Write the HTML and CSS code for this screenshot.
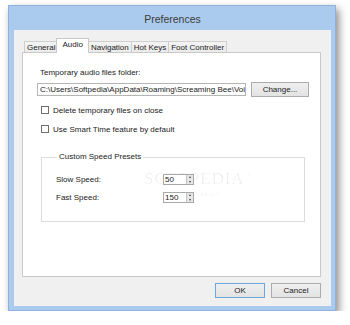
FILE: index.html
```html
<!DOCTYPE html>
<html lang="en">
<head>
  <meta charset="UTF-8">
  <title>Preferences</title>
  <link rel="stylesheet" href="styles.css">
</head>
<body>
  <!-- Окно настроек -->
  <div class="window">
    <div class="titlebar">Preferences</div>
    <div class="client">
      <div class="tabs">
        <div class="tab">General</div>
        <div class="tab active">Audio</div>
        <div class="tab">Navigation</div>
        <div class="tab">Hot Keys</div>
        <div class="tab">Foot Controller</div>
      </div>

      <div class="panel">
        <div class="label">Temporary audio files folder:</div>
        <div class="folder-row">
          <div class="textbox">C:\Users\Softpedia\AppData\Roaming\Screaming Bee\Voice</div>
          <button class="btn change">Change...</button>
        </div>

        <div class="check-row first"><span class="checkbox"></span>Delete temporary files on close</div>
        <div class="check-row"><span class="checkbox"></span>Use Smart Time feature by default</div>

        <fieldset class="group">
          <legend>Custom Speed Presets</legend>
          <div class="speed-row first">
            <span class="speed-label">Slow Speed:</span>
            <div class="spinner"><span class="value">50</span><span class="spin"><i class="up"></i><i class="down"></i></span></div>
          </div>
          <div class="speed-row">
            <span class="speed-label">Fast Speed:</span>
            <div class="spinner"><span class="value">150</span><span class="spin"><i class="up"></i><i class="down"></i></span></div>
          </div>
        </fieldset>

        <div class="watermark">SOFTPEDIA<sup>™</sup><small>www.softpedia.com</small></div>
      </div>

      <div class="actions">
        <button class="btn ok">OK</button>
        <button class="btn">Cancel</button>
      </div>
    </div>
  </div>
</body>
</html>
```

FILE: styles.css
```css
body {
  margin: 0;
  background: #fff;
  font-family: 'Liberation Sans', Arial, sans-serif;
  font-size: 8px;
  color: #222;
}

.window {
  box-sizing: border-box;
  width: 328px;
  height: 306px;
  margin: 5px 0 0 8px;
  padding: 0 4px 4px 5px;
  background: #abcbee;
  border: 1px solid #8fb1da;
  box-shadow: 3px 4px 8px rgba(0, 0, 0, 0.45);
  display: flex;
  flex-direction: column;
}

.titlebar {
  height: 24px;
  line-height: 27px;
  text-align: center;
  font-size: 10.5px;
  color: #3b3b3b;
}

.client {
  flex: 1;
  background: #f0f0f0;
  padding: 8px 10px 0 8px;
  display: flex;
  flex-direction: column;
}

/* Вкладки */
.tabs {
  display: flex;
  align-items: flex-end;
  padding-left: 2px;
  margin-bottom: -1px;
  height: 15px;
}

.tab {
  height: 11px;
  line-height: 11px;
  padding: 0 2px;
  border: 1px solid #cfcfcf;
  border-bottom: none;
  margin-right: -1px;
  background: linear-gradient(#f4f4f4, #e9e9e9);
  color: #222;
}

.tab.active {
  height: 14px;
  line-height: 12px;
  padding: 0 5px;
  margin: 0 -1px 0 -1px;
  background: #fff;
  border-color: #c9c9c9;
  position: relative;
  z-index: 1;
}

.panel {
  position: relative;
  box-sizing: border-box;
  height: 225px;
  background: #fff;
  border: 1px solid #c9c9c9;
  padding: 15px 0 0 14px;
}

.label {
  margin-left: 3px;
  line-height: 10px;
}

.folder-row {
  display: flex;
  align-items: center;
  margin-top: 4px;
  height: 15px;
}

.textbox {
  box-sizing: border-box;
  width: 209px;
  height: 13px;
  line-height: 11px;
  padding-left: 2px;
  border: 1px solid #b5b5b5;
  white-space: nowrap;
  overflow: hidden;
}

.btn {
  box-sizing: border-box;
  height: 15px;
  padding: 0;
  font-family: inherit;
  font-size: 8px;
  color: #222;
  background: linear-gradient(#efefef, #e3e3e3);
  border: 1px solid #acacac;
}

.change {
  width: 58px;
  margin-left: 5px;
}

.check-row {
  display: flex;
  align-items: center;
  height: 10px;
  margin: 9px 0 0 4px;
}

.check-row.first {
  margin-top: 8px;
}

.checkbox {
  box-sizing: border-box;
  width: 8px;
  height: 8px;
  border: 1px solid #6f6f6f;
  background: #fff;
  margin-right: 4px;
}

/* Группа скоростей */
.group {
  box-sizing: border-box;
  height: 70px;
  width: 264px;
  margin: 18px 0 0 4px;
  padding: 0 0 0 14px;
  border: 1px solid #dcdcdc;
}

.group legend {
  padding: 0 2px;
  margin-left: 1px;
  line-height: 10px;
}

.speed-row {
  display: flex;
  align-items: center;
  height: 11px;
  margin-top: 7px;
}

.speed-row.first {
  margin-top: 12px;
}

.speed-label {
  width: 107px;
}

.spinner {
  display: flex;
  height: 11px;
  box-sizing: border-box;
  border: 1px solid #a9a9a9;
  background: #fff;
  position: relative;
  z-index: 1;
}

.spinner .value {
  width: 21px;
  line-height: 9px;
  padding-left: 1px;
}

.spin {
  width: 6px;
  display: flex;
  flex-direction: column;
  background: #e6e6e6;
  border-left: 1px solid #c4c4c4;
}

.spin i {
  flex: 1;
  display: flex;
  justify-content: center;
  align-items: center;
}

.spin i::before {
  content: '';
  border-left: 1.5px solid transparent;
  border-right: 1.5px solid transparent;
}

.spin .up::before {
  border-bottom: 2px solid #444;
}

.spin .down::before {
  border-top: 2px solid #444;
}

.watermark {
  position: absolute;
  left: 121px;
  top: 116px;
  font-family: 'Liberation Serif', serif;
  font-size: 17px;
  letter-spacing: 1px;
  color: rgba(0, 0, 0, 0.07);
  pointer-events: none;
}

.watermark sup {
  font-size: 6px;
}

.watermark small {
  display: block;
  font-family: 'Liberation Sans', sans-serif;
  font-size: 6px;
  letter-spacing: 0;
  margin: 2px 0 0 25px;
}

.actions {
  display: flex;
  justify-content: flex-end;
  margin-top: 6px;
  padding-right: 0;
}

.actions .btn {
  width: 50px;
  margin-left: 6px;
}

.actions .ok {
  border-color: #6fa6dc;
}
```
